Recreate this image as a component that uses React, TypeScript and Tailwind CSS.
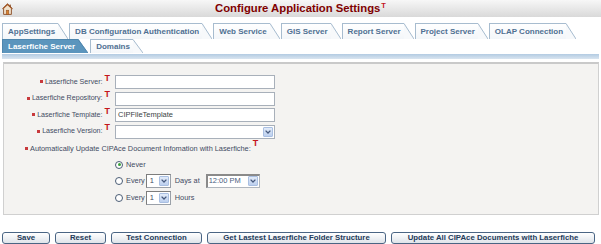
import React from "react";

const FONT = "font-['Liberation_Sans',Arial,sans-serif]";

const HomeIcon = () => (
  <svg width="11" height="12" viewBox="0 0 11 12">
    <path d="M5.5 0.8 L0.6 5.6 L1.6 5.6 L1.6 11.4 L9.4 11.4 L9.4 5.6 L10.4 5.6 Z" fill="#f1e2cc" stroke="#8a4b22" strokeWidth="0.9" strokeLinejoin="round" />
    <path d="M5.5 0.8 L0.6 5.6 L2 5.6 L5.5 2.3 L9 5.6 L10.4 5.6 Z" fill="#a3521f" />
    <rect x="4.2" y="7.2" width="2.6" height="4.2" fill="#d9822f" stroke="#8a4b22" strokeWidth="0.5" />
    <rect x="7.6" y="1.6" width="1.2" height="2.4" fill="#8a4b22" />
  </svg>
);

const TMark = () => (
  <span className="text-[#c4161c] font-bold text-[9px] leading-none self-start mt-[-3px] ml-[2px]">T</span>
);

const Star = () => <span className="inline-block w-[3px] h-[3px] bg-[#c8393c] mr-[2px] self-center" />;

const Tab = ({ label, active = false, h }: { label: string; active?: boolean; h: number }) => {
  const stroke = active ? "#4f86ad" : "#a7bccf";
  return (
    <div className="flex mr-[1px]" style={{ height: h }}>
      <div
        className={
          active
            ? "bg-[#5b95bd] border-l border-t border-[#4f86ad] text-white pl-[5px] pr-[3px] flex items-center font-bold text-[8px]"
            : "bg-gradient-to-b from-white to-[#f3f6f9] border-l border-t border-[#a7bccf] text-[#4f7092] pl-[5px] pr-[3px] flex items-center font-bold text-[8px]"
        }
      >
        {label}
      </div>
      <svg width="10" height={h} viewBox={`0 0 10 ${h}`} className="block">
        <polygon points={`0,0 0.5,0 10,${h} 0,${h}`} fill={active ? "#5b95bd" : "#f7f9fb"} />
        <line x1="0" y1="0.5" x2="10" y2={h} stroke={stroke} strokeWidth="1" />
      </svg>
    </div>
  );
};

const Arrow = () => (
  <span className="w-[10px] h-[10px] flex items-center justify-center bg-gradient-to-b from-[#e2ebf9] to-[#bccfee] border border-[#a9bfe2] rounded-[1px]">
    <svg width="6" height="4" viewBox="0 0 6 4">
      <path d="M0.6 0.6 L3 3 L5.4 0.6" stroke="#46597d" strokeWidth="1.3" fill="none" />
    </svg>
  </span>
);

const Input = ({ value = "" }: { value?: string }) => (
  <div className="w-[160px] h-[14px] bg-white border border-[#a8b0ba] flex items-center pl-[2px] text-[7.5px] text-[#3b3f46]">
    {value}
  </div>
);

const Row = ({ label, children }: { label: string; children: React.ReactNode }) => (
  <div className="flex items-center h-[14px]">
    <div className="w-[106px] flex justify-end items-center text-[7.1px] text-[#3f4b63]">
      <Star />
      <span>{label}</span>
      <TMark />
    </div>
    <div className="ml-[5px]">{children}</div>
  </div>
);

const Radio = ({ checked = false }: { checked?: boolean }) => (
  <span className="w-[8px] h-[8px] rounded-full border border-[#4b5d75] bg-white flex items-center justify-center">
    {checked && <span className="w-[3px] h-[3px] rounded-full bg-[#3aa13a]" />}
  </span>
);

const SmallSelect = () => (
  <div className="ml-[1px] w-[25px] h-[14px] bg-white border border-[#9aa0a8] border-l-[#7d7d7d] border-t-[#7d7d7d] flex items-center justify-between pl-[3px] pr-[1px] text-[7.5px] text-[#3f4b63]">
    <span>1</span>
    <Arrow />
  </div>
);

const Btn = ({ label, w }: { label: string; w: number }) => (
  <div
    className="h-[12px] rounded-[3px] border border-[#4a6584] bg-gradient-to-b from-white to-[#dfe4ea] flex items-center justify-center text-[7.8px] font-bold text-[#243b5a] shrink-0"
    style={{ width: w }}
  >
    {label}
  </div>
);

export default function App() {
  return (
    <div className={`w-[601px] h-[244px] bg-white overflow-hidden ${FONT}`}>
      {/* title bar */}
      <div className="h-[17px] bg-gradient-to-b from-[#f7f7f7] to-[#d9d9d9] grid grid-cols-[40px_1fr_40px] items-center">
        <div className="pl-[2px] pt-[1px] flex items-center">
          <HomeIcon />
        </div>
        <div className="flex justify-center items-center">
          <span className="text-[11.3px] font-bold text-[#800000] leading-none">Configure Application Settings</span>
          <span className="text-[7.5px] font-bold text-[#c4161c] leading-none self-start ml-[1px] mt-[-1px]">T</span>
        </div>
        <div />
      </div>

      {/* tabs row 1 */}
      <div className="mt-[6px] pl-[2px] flex">
        <Tab label="AppSettings" h={16} />
        <Tab label="DB Configuration Authentication" h={16} />
        <Tab label="Web Service" h={16} />
        <Tab label="GIS Server" h={16} />
        <Tab label="Report Server" h={16} />
        <Tab label="Project Server" h={16} />
        <Tab label="OLAP Connection" h={16} />
      </div>
      {/* tabs row 2 */}
      <div className="pl-[2px] flex">
        <Tab label="Laserfiche Server" h={14} active />
        <div className="w-[1px]" />
        <Tab label="Domains" h={14} />
      </div>
      <div className="mt-[1px] mx-[2px] h-[5px] bg-gradient-to-b from-[#b3cbe2] to-[#d9e5f0]" />

      {/* panel */}
      <div className="mt-[3px] ml-[3px] w-[596px] h-[153px] bg-[#f4f3f1] border border-[#d0d0d0] border-t-2 border-t-[#c9c9c9] pt-[11px]">
        <div className="flex flex-col gap-[2.5px]">
          <Row label="Laserfiche Server:">
            <Input />
          </Row>
          <Row label="Laserfiche Repository:">
            <Input />
          </Row>
          <Row label="Laserfiche Template:">
            <Input value="CIPFileTemplate" />
          </Row>
          <Row label="Laserfiche Version:">
            <div className="w-[160px] h-[14px] bg-white border border-[#a8b0ba] flex items-center justify-end pr-[1px]">
              <Arrow />
            </div>
          </Row>
        </div>

        <div className="mt-[3px] h-[14px] pl-[21px] flex items-center text-[7.35px] text-[#3f4b63]">
          <Star />
          <span>Automatically Update CIPAce Document Infomation with Laserfiche:</span>
          <TMark />
        </div>

        <div className="pl-[111px] text-[7.35px] text-[#3f4b63]">
          <div className="mt-[2px] h-[14px] flex items-center">
            <Radio checked />
            <span className="ml-[3px]">Never</span>
          </div>
          <div className="mt-[2px] h-[14px] flex items-center">
            <Radio />
            <span className="ml-[3px]">Every</span>
            <SmallSelect />
            <span className="ml-[4px]">Days at</span>
            <div className="ml-[6px] w-[54px] h-[14px] bg-white border border-[#b0b6be] border-l-2 border-t-2 border-l-[#8a8a8a] border-t-[#8a8a8a] flex items-center justify-between pl-[1px] pr-[1px] text-[7.5px] text-[#4a5e80]">
              <span>12:00 PM</span>
              <Arrow />
            </div>
          </div>
          <div className="mt-[3px] h-[14px] flex items-center">
            <Radio />
            <span className="ml-[3px]">Every</span>
            <SmallSelect />
            <span className="ml-[4px]">Hours</span>
          </div>
        </div>
      </div>

      {/* buttons */}
      <div className="mt-[17px] pl-[2px] flex gap-[5px]">
        <Btn label="Save" w={48} />
        <Btn label="Reset" w={51} />
        <Btn label="Test Connection" w={91} />
        <Btn label="Get Lastest Laserfiche Folder Structure" w={179} />
        <Btn label="Update All CIPAce Documents with Laserfiche" w={204} />
      </div>
    </div>
  );
}
